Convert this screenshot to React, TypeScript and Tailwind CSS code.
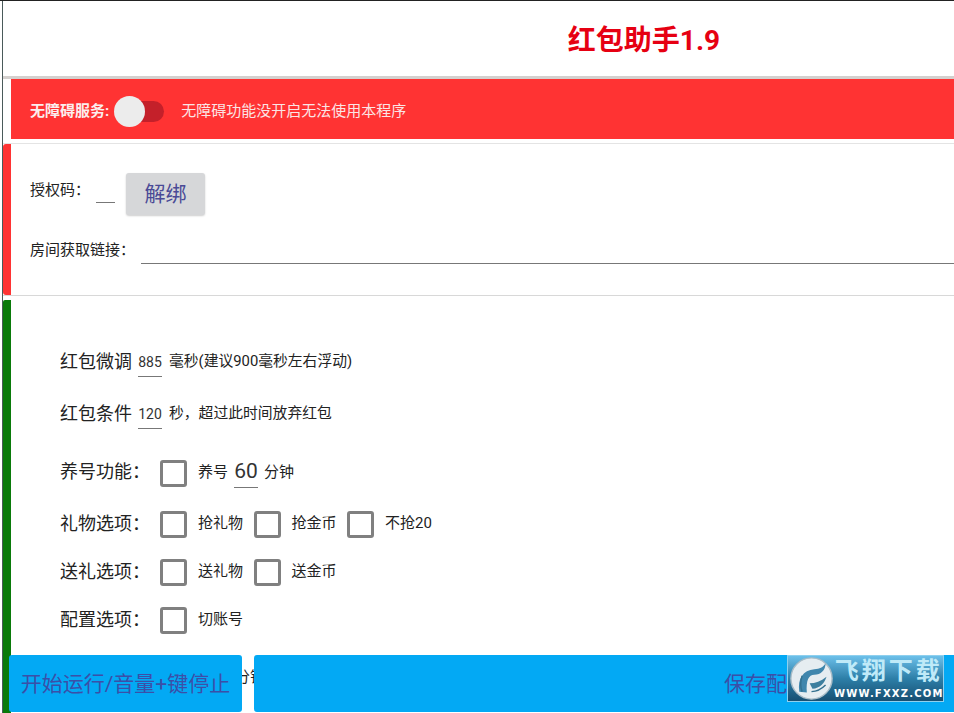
import React from 'react';

const cjk = "font-['Roboto','Noto_Sans_CJK_SC',sans-serif]";

function Check() {
  return <span className="block w-[27px] h-[27px] shrink-0 rounded-[3px] border-[3px] border-[#808080] bg-white" />;
}

function Option({ label, className = 'w-[44.5px]' }: { label: string; className?: string }) {
  return (
    <div className="flex items-center">
      <Check />
      <span className={`ml-[11px] mt-[-2px] text-[15px] text-[#222] whitespace-nowrap ${className}`}>{label}</span>
    </div>
  );
}

function OptionRow({ label, className, children }: { label: string; className: string; children: React.ReactNode }) {
  return (
    <div className={`flex items-center ${className}`}>
      <span className="w-[100px] mt-[-2px] text-lg leading-6 text-[#222] whitespace-nowrap">{label}</span>
      <div className="flex items-center gap-[11px]">{children}</div>
    </div>
  );
}

function TuneRow({ label, value, text, className }: { label: string; value: string; text: string; className: string }) {
  return (
    <div className={`flex items-center ${className}`}>
      <span className="mt-[3px] text-lg leading-6 text-[#222] whitespace-nowrap">{label}</span>
      <span className="ml-[6px] w-6 h-[34px] pt-[9px] text-center text-sm leading-5 text-[#333] border-b border-[#777]">{value}</span>
      <span className="ml-[7px] mt-[3px] text-[14.8px] text-[#222] whitespace-nowrap">{text}</span>
    </div>
  );
}

function Watermark() {
  return (
    <div className="absolute right-[10px] top-0 w-[157px] h-[47px] flex items-center bg-gradient-to-b from-[#6cc0ea] via-[#2d7fa8] to-[#174f72] border border-[#8fd0ee]">
      <svg viewBox="0 0 48 48" className="ml-[1px] w-[45px] h-[45px] shrink-0">
        <circle cx="24" cy="24" r="22" fill="#e6edf1" stroke="#a9bcc7" strokeWidth="1.5" />
        <path d="M11 38C9 24 15 15 27 14C33 14 36 12 39 8C39 15 34 20 27 20C21 20 18 26 19 39Z" fill="#3f86ad" />
        <path d="M14 21C12 27 12 33 14 38" fill="none" stroke="#33708f" strokeWidth="1.5" />
        <path d="M22 29C28 29 34 27 40 22C38 29 33 34 25 35C24 33 23 31 22 29Z" fill="#3d7f9f" />
        <path d="M24 38C30 38 35 35 39 31" fill="none" stroke="#33708f" strokeWidth="1.5" />
      </svg>
      <div className="flex-1 flex flex-col items-center leading-none">
        <span className="text-2xl leading-[27px] font-bold tracking-[3px] text-[#bfeaf8] whitespace-nowrap">飞翔下载</span>
        <span className="mt-[3px] text-[10px] leading-3 font-bold tracking-[1.2px] text-white font-['DejaVu_Sans',sans-serif] whitespace-nowrap">WWW.FXXZ.COM</span>
      </div>
    </div>
  );
}

export default function App() {
  return (
    <div className={`relative w-[954px] h-[713px] overflow-hidden bg-white ${cjk}`}>
      <div className="h-[713px] border-t border-t-[#222] pl-[2px] flex">
        <div className="flex-1 min-w-0 border-l border-l-[#4a5a5a] flex flex-col">
          {/* title */}
          <div className="h-[75px] flex items-center justify-center pl-[331px] pt-1 shrink-0">
            <span className="text-[28px] font-bold text-[#e60012]">红包助手1.9</span>
          </div>
          <div className="h-[3px] bg-[#d4d0ce] shrink-0" />

          {/* service bar */}
          <div className="ml-[8px] h-[60px] bg-[#ff3333] flex items-center pl-[19px] pt-[4px] shrink-0">
            <span className="text-[15px] font-bold text-[#fbeeee] whitespace-nowrap">无障碍服务:</span>
            <div className="relative ml-[5px] w-[50px] h-[21px] rounded-full">
              <span className="absolute left-[5px] top-0 w-[45px] h-[21px] rounded-full bg-[#c4202a]" />
              <span className="absolute left-0 top-[-5px] w-[31px] h-[31px] rounded-full bg-[#ececec]" />
            </div>
            <span className="ml-[17px] text-[15px] text-[#fbe5e5] whitespace-nowrap">无障碍功能没开启无法使用本程序</span>
          </div>
          <div className="h-[5px] border-b border-[#e4e4e4] shrink-0" />

          {/* license */}
          <div className="h-[152px] flex border-b border-[#d8d8d8] shrink-0">
            <div className="w-[8px] h-[151px] rounded-l-[3px] bg-[#ff3333] shrink-0" />
            <div className="flex-1 pl-[19px]">
              <div className="h-[88px] flex items-start pt-[29px]">
                <span className="mt-[7px] text-[15px] leading-5 text-[#222]">授权码：</span>
                <span className="ml-[6px] mt-[29px] w-[19px] border-b border-[#777]" />
                <span className="ml-[11px] w-[79px] h-[42px] pt-[2px] rounded-[3px] bg-[#d6d7d9] shadow-[0_1px_2px_rgba(0,0,0,0.2)] flex items-center justify-center text-[21px] text-[#4a4a96]">解绑</span>
              </div>
              <div className="flex items-start h-[40px]">
                <span className="text-[15px] leading-5 pt-[8px] text-[#222] whitespace-nowrap">房间获取链接：</span>
                <span className="ml-[6px] flex-1 h-[32px] border-b border-[#777]" />
              </div>
            </div>
          </div>
          <div className="h-[4px] shrink-0" />

          {/* settings */}
          <div className="flex-1 flex">
            <div className="w-[8px] bg-[#0a7a0a] rounded-tl-[2px] shrink-0" />
            <div className="flex-1 pl-[49px] pt-[43px]">
              <TuneRow className="h-[34px]" label="红包微调" value="885" text="毫秒(建议900毫秒左右浮动)" />
              <TuneRow className="h-[34px] mt-[18px]" label="红包条件" value="120" text="秒，超过此时间放弃红包" />
              <div className="flex items-center h-[34px] mt-[25px]">
                <span className="w-[100px] mt-[2px] text-lg leading-6 text-[#222] whitespace-nowrap">养号功能：</span>
                <div className="mt-[4px]"><Check /></div>
                <span className="ml-[11px] mt-[3px] text-[15px] text-[#222]">养号</span>
                <span className="ml-[6px] w-6 h-[34px] pt-[1px] text-center text-[21px] leading-8 text-[#333] border-b border-[#777]">60</span>
                <span className="ml-[6px] mt-[3px] text-[15px] text-[#222] whitespace-nowrap">分钟</span>
              </div>
              <OptionRow className="h-[27px] mt-[23px]" label="礼物选项：">
                <Option label="抢礼物" />
                <Option label="抢金币" />
                <Option label="不抢20" className="w-[50px]" />
              </OptionRow>
              <OptionRow className="h-[27px] mt-[21px]" label="送礼选项：">
                <Option label="送礼物" />
                <Option label="送金币" />
              </OptionRow>
              <OptionRow className="h-[27px] mt-[21px]" label="配置选项：">
                <Option label="切账号" />
              </OptionRow>
              <div className="mt-[33px] pl-[175px] text-[15px] leading-5 text-[#222]">分钟</div>
            </div>
          </div>
        </div>
      </div>

      {/* floating buttons */}
      <div className="absolute left-[9px] right-0 top-[655px] h-[57px] flex gap-3 text-[21px] text-[#3b4fa8]">
        <div className="w-[233px] pt-[3px] rounded-[3px] bg-[#03a9f4] flex items-center justify-center whitespace-nowrap">开始运行/音量+键停止</div>
        <div className="relative flex-1 rounded-l-[3px] bg-[#03a9f4] flex items-center justify-center pl-[324px] pt-[3px] whitespace-nowrap">
          保存配置
          <Watermark />
        </div>
      </div>
    </div>
  );
}
